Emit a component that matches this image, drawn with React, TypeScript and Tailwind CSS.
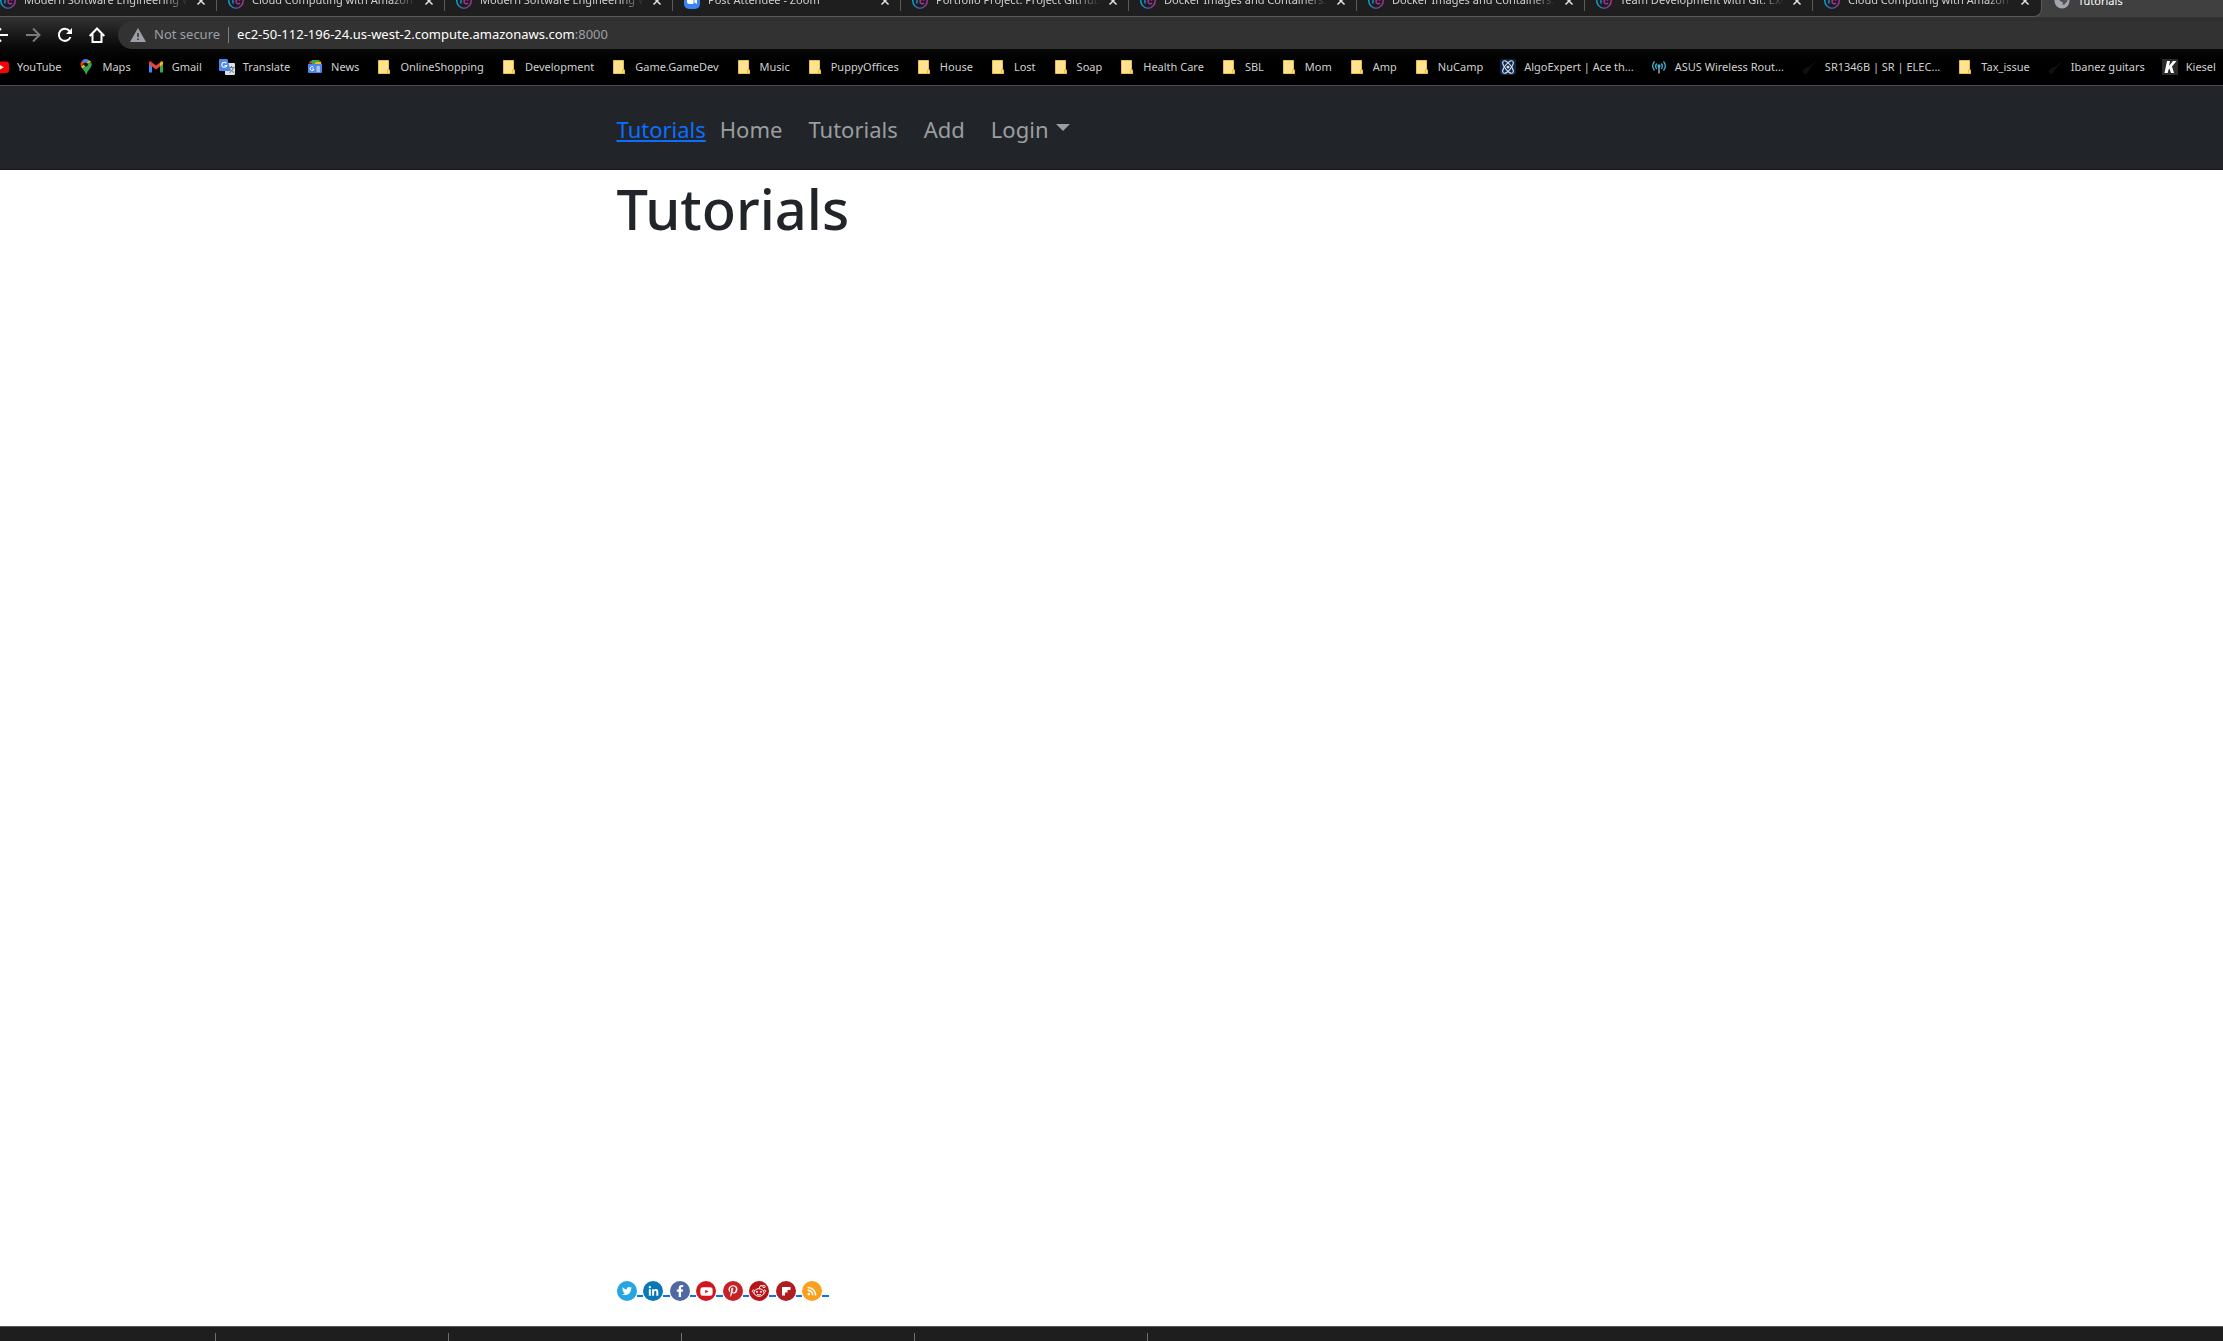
import React from 'react';
import { FaTwitter, FaLinkedinIn, FaFacebookF, FaYoutube, FaPinterestP, FaRss } from 'react-icons/fa';

const tabs = [
  'Modern Software Engineering W',
  'Cloud Computing with Amazon W',
  'Modern Software Engineering W',
  'Post Attendee - Zoom',
  'Portfolio Project: Project GitHub',
  'Docker Images and Containers: E',
  'Docker Images and Containers: E',
  'Team Development with Git: Exe',
  'Cloud Computing with Amazon W',
];

function CourseIcon() {
  return (
    <svg viewBox="0 0 16 16" className="size-4 shrink-0" fill="none" aria-hidden="true">
      <defs>
        <linearGradient id="course" x1="0" x2="1">
          <stop offset="0" stopColor="#0aa5dc" />
          <stop offset="0.5" stopColor="#4a4fa0" />
          <stop offset="1" stopColor="#b0309a" />
        </linearGradient>
      </defs>
      <circle cx="8" cy="8" r="7.2" stroke="url(#course)" strokeWidth="1.4" />
      <path d="M5 5v5.5M5 7c0-1.500 1-2 2-2" stroke="#0aa5dc" strokeWidth="1.3" />
      <path d="M12 7.500c-1.500-2-4-1-4 1s2.500 3 4 1.500" stroke="#b0309a" strokeWidth="1.400" />
    </svg>
  );
}

function ZoomIcon() {
  return (
    <svg viewBox="0 0 16 16" className="size-4 shrink-0" aria-hidden="true">
      <rect width="16" height="16" rx="5" fill="#3b82f6" />
      <path d="M3 5h6.500v6H5a2 2 0 0 1-2-2zM10.200 7.500l2.800-2v5.500l-2.800-1.700z" fill="#fff" />
    </svg>
  );
}

function GlobeIcon() {
  return (
    <svg viewBox="0 0 16 16" className="size-4 shrink-0" aria-hidden="true">
      <circle cx="8" cy="8" r="7.500" fill="#a3a7ac" />
      <path d="M7 3l6 1 .5 4-3 3.500-2 .5.500-2.500-3-1.500L5 6z" fill="#505357" />
    </svg>
  );
}

function Tab({ title }: { title: string }) {
  return (
    <div className="flex h-8 items-center gap-2 pl-[11px]">
      {title.includes('Zoom') ? <ZoomIcon /> : <CourseIcon />}
      <span className="w-[164px] overflow-hidden whitespace-nowrap text-[11px] text-[#d0d0d0] [mask-image:linear-gradient(to_right,black_85%,transparent)]">
        {title}
      </span>
      <button aria-label={'Close ' + title} className="text-[#dcdcdc]">
        <svg viewBox="0 0 10 10" className="size-[10px]" stroke="currentColor" strokeWidth="1.600" aria-hidden="true">
          <path d="M1.500 1.500l7 7M8.500 1.500l-7 7" />
        </svg>
      </button>
    </div>
  );
}

function FolderIcon() {
  return (
    <svg viewBox="0 0 16 16" className="size-4" aria-hidden="true">
      <path d="M2.500 1.500h10v9.500h1v3.500h-11z" fill="#ffe391" stroke="#e8c048" />
      <path d="M11.500 11h2v3.500h-2z" fill="#ffe391" stroke="#e8b93a" />
    </svg>
  );
}

const bookmarkIcons: Record<string, React.ReactNode> = {
  YouTube: (
    <>
      <rect y="2.500" width="16" height="11.500" rx="3" fill="#f00" />
      <path d="M6.300 5.700l4.500 2.500-4.500 2.600z" fill="#fff" />
    </>
  ),
  Maps: (
    <>
      <path d="M8 0a5.500 5.500 0 0 0-4.200 1.900L8 5.500l3.500-4.100A5.500 5.500 0 0 0 8 0z" fill="#4285f4" />
      <path d="M3.800 1.900A5.500 5.500 0 0 0 3 7.500l3.600-4.200z" fill="#ea4335" />
      <path d="M3 7.500l1.500 2.300L13 2.500l-1.500-1.100z" fill="#fbbc04" />
      <path d="M13 2.700a5.500 5.500 0 0 1-.2 5.500C11 11 9 12.500 8.500 15.500H7.800C7.500 12.800 5.800 11.500 4.500 9.800z" fill="#34a853" />
      <circle cx="8" cy="5.500" r="1.900" fill="#111" />
    </>
  ),
  Gmail: (
    <>
      <path d="M1 4v9.500h3V7z" fill="#4285f4" />
      <path d="M15 4v9.500h-3V7z" fill="#34a853" />
      <path d="M12 3.500l1-1c1-.7 2 0 2 1.500v1l-3 2.500z" fill="#fbbc04" />
      <path d="M4 3.500L3 2.500C2 1.800 1 2.500 1 4v1l3 2.500 4 3 4-3v-4l-4 3z" fill="#ea4335" />
    </>
  ),
  Translate: (
    <>
      <rect x="6" y="4" width="10" height="12" rx="1" fill="#dcdfe3" />
      <path d="M9.500 8.500h6M12.500 7v1.500M14.500 8.500c-.5 2-2 4-4 5M11 9.500c.5 1.500 2 3 4 4" stroke="#6b7680" fill="none" />
      <path d="M1 0h7.500l3 12H1a1 1 0 0 1-1-1V1a1 1 0 0 1 1-1z" fill="#4a86ee" />
      <path d="M7.300 4.300A2.500 2.500 0 1 0 7.700 6.500H5.500" stroke="#fff" strokeWidth="1.100" fill="none" />
    </>
  ),
  News: (
    <>
      <path d="M2 5L3 2l5 1z" fill="#ea4335" />
      <rect x="4.500" y="1" width="8" height="8" fill="#34a853" />
      <path d="M8 3.500l6-1 .5 4L8 8z" fill="#fbbc04" />
      <path d="M1 5h14v8a1 1 0 0 1-1 1H2a1 1 0 0 1-1-1z" fill="#4a86ee" />
      <path d="M6.500 8.200A2 2 0 1 0 7 10H5.300M9.500 8H13M9.500 10H13M9.500 12H13" stroke="#fff" fill="none" />
    </>
  ),
  AlgoExpert: (
    <>
      <rect width="16" height="16" rx="2" fill="#0b2545" />
      <g stroke="#d5dfe9" fill="none">
        <ellipse cx="8" cy="8" rx="7.500" ry="3" transform="rotate(52 8 8)" />
        <ellipse cx="8" cy="8" rx="7.500" ry="3" transform="rotate(-52 8 8)" />
      </g>
      <circle cx="8" cy="8" r="1.500" fill="#d5dfe9" />
    </>
  ),
  ASUS: (
    <g stroke="#43b4d8" fill="none" strokeWidth="1.300">
      <path d="M3.500 2.500c-2.500 3-2.500 6 0 9M5.700 4.500c-1.500 2-1.500 3.500 0 5.500M12.500 2.500c2.500 3 2.500 6 0 9M10.300 4.500c1.500 2 1.500 3.500 0 5.500" />
      <path d="M8 7v7.500" stroke="#9a9a9a" strokeWidth="1.600" />
      <circle cx="8" cy="7" r="1" fill="#43b4d8" />
    </g>
  ),
  Guitar: <path d="M15.500.500L9 7.500l-3.500.500-4 4 1 3 3.500-.500 2.500-4L15 2z" fill="#101010" />,
  Kiesel: (
    <>
      <rect width="16" height="16" fill="#2b2b2b" />
      <path d="M5 2h3L7 7l4-5h3.500L10 7.500l2 6.500H9L7.500 9.500 6.500 10.700 5.700 14H2.500z" fill="#fff" />
    </>
  ),
};

const bookmarks: { label: string; icon?: string }[] = [
  { label: 'YouTube', icon: 'YouTube' },
  { label: 'Maps', icon: 'Maps' },
  { label: 'Gmail', icon: 'Gmail' },
  { label: 'Translate', icon: 'Translate' },
  { label: 'News', icon: 'News' },
  { label: 'OnlineShopping' },
  { label: 'Development' },
  { label: 'Game.GameDev' },
  { label: 'Music' },
  { label: 'PuppyOffices' },
  { label: 'House' },
  { label: 'Lost' },
  { label: 'Soap' },
  { label: 'Health Care' },
  { label: 'SBL' },
  { label: 'Mom' },
  { label: 'Amp' },
  { label: 'NuCamp' },
  { label: 'AlgoExpert | Ace th...', icon: 'AlgoExpert' },
  { label: 'ASUS Wireless Rout...', icon: 'ASUS' },
  { label: 'SR1346B | SR | ELEC...', icon: 'Guitar' },
  { label: 'Tax_issue' },
  { label: 'Ibanez guitars', icon: 'Guitar' },
  { label: 'Kiesel', icon: 'Kiesel' },
];

function RedditFace() {
  return (
    <svg viewBox="0 0 20 20" className="size-5" fill="none" stroke="#fff" aria-hidden="true">
      <ellipse cx="10" cy="11.500" rx="5" ry="3.800" />
      <path d="M5.500 9.500C3.500 8 2 10.500 4.800 12M14.500 9.500c2-1.500 3.500 1 .7 2.500M10 7.500l1.500-3 2.500.500" />
      <circle cx="15" cy="5.500" r="1.200" />
      <path d="M8 13.300c1.200.8 2.800.8 4 0" />
      <circle cx="8" cy="10.800" r=".6" fill="#fff" />
      <circle cx="12" cy="10.800" r=".6" fill="#fff" />
    </svg>
  );
}

function FlipboardMark() {
  return (
    <svg viewBox="0 0 20 20" className="size-5" aria-hidden="true">
      <path d="M6 6h8.500v3h-3v2.500H9V14.500H6z" fill="#fff" />
    </svg>
  );
}

const social = [
  { name: 'Twitter', color: 'bg-[#26a6e0]', icon: <FaTwitter className="size-[10px]" /> },
  { name: 'LinkedIn', color: 'bg-[#0a78b5]', icon: <FaLinkedinIn className="size-[11px]" /> },
  { name: 'Facebook', color: 'bg-[#4f68a3]', icon: <FaFacebookF className="size-3" /> },
  { name: 'YouTube', color: 'bg-[#d0171f]', icon: <FaYoutube className="size-[13px]" /> },
  { name: 'Pinterest', color: 'bg-[#c62127]', icon: <FaPinterestP className="size-3" /> },
  { name: 'Reddit', color: 'bg-[#b8151a]', icon: <RedditFace /> },
  { name: 'Flipboard', color: 'bg-[#b01d20]', icon: <FlipboardMark /> },
  { name: 'RSS', color: 'bg-[#f9a11f]', icon: <FaRss className="size-[10px]" /> },
];

function BrowserChrome() {
  return (
    <header className="shrink-0 overflow-hidden border-b border-[#4c4d50] bg-black">
      <div className="flex h-[17px] items-end overflow-hidden bg-[#404040]">
        <div className="-ml-[11px] flex h-8 shrink-0 items-center divide-x divide-[#5a5a5a] rounded-br-lg border-b border-r border-[#5a5a5a] bg-[#1e1e1e]">
          {tabs.map((title, i) => (
            <div key={i} className="flex h-5 w-[228px] shrink-0 items-center">
              <Tab title={title} />
            </div>
          ))}
        </div>
        <div className="flex h-8 items-center gap-2 pl-3 text-[11px] text-white">
          <GlobeIcon />
          Tutorials
        </div>
      </div>
      <div className="bg-linear-to-b from-[#333] to-black to-80%">
        <div className="flex items-center pt-[4px]">
          <div className="flex w-[118px] shrink-0 items-center gap-4 text-white">
            <button aria-label="Back" className="-ml-[7px]">
              <svg viewBox="0 0 16 16" className="size-4" fill="none" stroke="currentColor" strokeWidth="2" aria-hidden="true">
                <path d="M15 8H2M8 1.500L1.500 8 8 14.500" />
              </svg>
            </button>
            <button aria-label="Forward" className="text-[#7a7a7a]">
              <svg viewBox="0 0 16 16" className="size-4" fill="none" stroke="currentColor" strokeWidth="2" aria-hidden="true">
                <path d="M1 8h13M8 1.500L14.500 8 8 14.500" />
              </svg>
            </button>
            <button aria-label="Reload">
              <svg viewBox="0 0 16 16" className="size-4" fill="none" stroke="currentColor" strokeWidth="2" aria-hidden="true">
                <path d="M13.500 10A6 6 0 1 1 12.500 4L14 6" />
                <path d="M15 1v6H9z" fill="currentColor" stroke="none" />
              </svg>
            </button>
            <button aria-label="Home">
              <svg viewBox="0 0 16 16" className="size-4" fill="none" stroke="currentColor" strokeWidth="2" aria-hidden="true">
                <path d="M.700 9L8 1.500 15.300 9M3.500 7v8h9V7" />
              </svg>
            </button>
          </div>
          <div className="flex h-7 flex-1 items-center rounded-l-full bg-[#323232] pl-3 text-[13px]">
            <svg viewBox="0 0 16 14" className="mr-2 h-[14px] w-4" aria-hidden="true">
              <path d="M8 0l8 14H0z" fill="#9aa0a6" />
              <path d="M7.200 5h1.600v4H7.200zM7.200 10.500h1.600V12H7.200z" fill="#323232" />
            </svg>
            <span className="text-[#9aa0a6]">Not secure</span>
            <span className="mx-2 h-4 w-px bg-[#7c7f83]" />
            <span className="text-white">
              ec2-50-112-196-24.us-west-2.compute.amazonaws.com<span className="text-[#9aa0a6]">:8000</span>
            </span>
          </div>
        </div>
        <nav aria-label="Bookmarks" className="flex h-9 items-center gap-[17px] overflow-hidden text-[11px] text-[#d0d0d0]">
          {bookmarks.map(({ label, icon }, i) => (
            <a key={label} href="#" className={`flex shrink-0 items-center gap-2 whitespace-nowrap ${i === 0 ? '-ml-[7px]' : ''}`}>
              {icon ? (
                <svg viewBox="0 0 16 16" className="size-4" aria-hidden="true">
                  {bookmarkIcons[icon]}
                </svg>
              ) : (
                <FolderIcon />
              )}
              {label}
            </a>
          ))}
        </nav>
      </div>
    </header>
  );
}

export default function App() {
  return (
    <div className="flex min-h-screen flex-col bg-white font-['Noto_Sans','Open_Sans',sans-serif] text-[#212529]">
      <BrowserChrome />
      <nav aria-label="Main" className="h-[84px] shrink-0 border-b border-[#16181b] bg-[#212529] pt-[3px]">
        <div className="mx-auto flex h-full max-w-[990px] items-center text-[22px] text-[#9b9d9e]">
          <a href="#" className="mr-[14px] text-[#0d6efd] underline decoration-2 underline-offset-2">Tutorials</a>
          <div className="flex items-center gap-[26px]">
            <a href="#">Home</a>
            <a href="#">Tutorials</a>
            <a href="#">Add</a>
            <button className="flex items-center gap-2">
              Login
              <svg viewBox="0 0 14 7" className="mb-1 h-[7px] w-[14px]" aria-hidden="true">
                <path d="M0 0h14L7 7z" fill="currentColor" />
              </svg>
            </button>
          </div>
        </div>
      </nav>
      <main className="mx-auto w-full max-w-[990px] flex-1 pt-0.5">
        <h1 className="text-[56px] font-medium leading-[72px]">Tutorials</h1>
      </main>
      <footer className="mx-auto w-full max-w-[990px] pb-[25px]">
        <div className="flex w-[212px]">
          {social.map(({ name, color, icon }) => (
            <a key={name} href="#" aria-label={name} className="flex flex-1 items-end">
              <span className={`flex size-5 shrink-0 items-center justify-center rounded-full text-white ${color}`}>
                {icon}
              </span>
              <span className="mb-1 h-[2px] flex-1 bg-[#0d6efd]" />
            </a>
          ))}
        </div>
      </footer>
      <div className="flex h-[15px] shrink-0 items-end border-t border-[#555] bg-[#1e1e1e]">
        <div className="h-2 w-[216px] border-r border-[#707070]" />
        <div className="h-2 w-[233px] border-r border-[#707070]" />
        <div className="h-2 w-[233px] border-r border-[#707070]" />
        <div className="h-2 w-[233px] border-r border-[#707070]" />
        <div className="h-2 w-[233px] border-r border-[#707070]" />
      </div>
    </div>
  );
}
